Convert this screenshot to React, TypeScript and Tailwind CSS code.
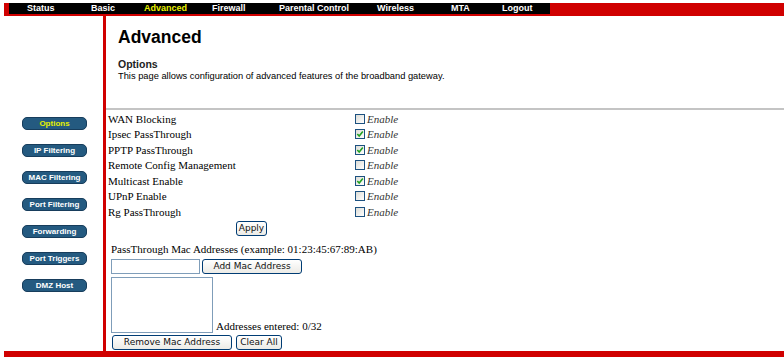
import React from 'react';

const NAV = [
  { label: 'Status', x: 27 },
  { label: 'Basic', x: 91 },
  { label: 'Advanced', x: 144, active: true },
  { label: 'Firewall', x: 212 },
  { label: 'Parental Control', x: 279 },
  { label: 'Wireless', x: 377 },
  { label: 'MTA', x: 451 },
  { label: 'Logout', x: 502 },
];

const SIDE = ['Options', 'IP Filtering', 'MAC Filtering', 'Port Filtering', 'Forwarding', 'Port Triggers', 'DMZ Host'];

const ROWS = [
  { label: 'WAN Blocking', on: false },
  { label: 'Ipsec PassThrough', on: true },
  { label: 'PPTP PassThrough', on: true },
  { label: 'Remote Config Management', on: false },
  { label: 'Multicast Enable', on: true },
  { label: 'UPnP Enable', on: false },
  { label: 'Rg PassThrough', on: false },
];

const Check = ({ on }: { on: boolean }) => (
  <span className="w-[10px] h-[10px] border border-[#1c5180] bg-gradient-to-br from-[#dcdcd6] to-white flex items-center justify-center">
    {on && (
      <svg width="8" height="8" viewBox="0 0 8 8">
        <path d="M1.3 4 L3.2 6 L6.8 1.6" stroke="#21a121" strokeWidth="1.6" fill="none" />
      </svg>
    )}
  </span>
);

const XpButton = ({ children, className }: { children: React.ReactNode; className: string }) => (
  <button
    className={`h-[15px] border border-[#003c74] rounded-[3px] bg-gradient-to-b from-white to-[#ecebe6] text-[9px] text-[#111] leading-none flex items-center justify-center ${className}`}
    style={{ fontFamily: '"DejaVu Sans", Verdana, sans-serif' }}
  >
    {children}
  </button>
);

export default function App() {
  return (
    <div className="w-[784px] h-[361px] bg-white overflow-hidden" style={{ fontFamily: '"Liberation Serif", "Times New Roman", serif' }}>
      {/* top nav */}
      <div className="mt-[3px] ml-[4px] h-[13px] bg-[#d00000]">
        <div className="ml-[5px] w-[541px] h-[11px] bg-black relative" style={{ fontFamily: '"Liberation Sans", Arial, sans-serif' }}>
          {NAV.map((n) => (
            <span
              key={n.label}
              className={`absolute top-0 text-[9px] font-bold leading-[11px] ${n.active ? 'text-[#e8f000]' : 'text-white'}`}
              style={{ left: n.x - 9 }}
            >
              {n.label}
            </span>
          ))}
        </div>
      </div>

      <div className="flex h-[335px]">
        {/* sidebar */}
        <div className="w-[103px] flex flex-col gap-[14px] pt-[101px] pl-[22px]" style={{ fontFamily: '"Liberation Sans", Arial, sans-serif' }}>
          {SIDE.map((s, i) => (
            <div
              key={s}
              className={`w-[65px] h-[13px] rounded-[5px] bg-[#245a80] border border-[#173d5c] flex items-center justify-center text-[8px] font-bold leading-none ${i === 0 ? 'text-[#e6f000]' : 'text-white'}`}
            >
              {s}
            </div>
          ))}
        </div>
        <div className="w-[3px] bg-[#d00000]" />

        {/* content */}
        <div className="flex-1 flex flex-col">
          <div className="pl-[12px] pt-[10px] h-[92px]" style={{ fontFamily: '"Liberation Sans", Arial, sans-serif' }}>
            <div className="text-[17.5px] font-bold leading-[22px] text-black">Advanced</div>
            <div className="mt-[10px] text-[10.5px] font-semibold leading-[12px] text-[#222]">Options</div>
            <div className="text-[9.3px] leading-[12px] text-black">This page allows configuration of advanced features of the broadband gateway.</div>
          </div>
          <div className="h-[2px] bg-[#c4c4c4]" />

          <div className="pl-[2px] pt-[1px] text-[11px] text-black">
            {ROWS.map((r) => (
              <div key={r.label} className="flex items-center h-[15.5px]">
                <span className="w-[247px]">{r.label}</span>
                <Check on={r.on} />
                <span className="ml-[2px] italic text-[#333]">Enable</span>
              </div>
            ))}
            <div className="flex pl-[128px] mt-[1px]">
              <XpButton className="w-[31px]">Apply</XpButton>
            </div>
            <div className="pl-[3px] mt-[7px] leading-[13px]">PassThrough Mac Addresses (example: 01:23:45:67:89:AB)</div>
            <div className="pl-[3px] mt-[3px] flex items-center gap-[2px]">
              <input className="w-[89px] h-[15px] border border-[#7f9db9] bg-white" />
              <XpButton className="w-[100px]">Add Mac Address</XpButton>
            </div>
            <div className="pl-[3px] mt-[3px] flex items-end gap-[3px]">
              <textarea className="w-[102px] h-[56px] border border-[#7f9db9] bg-white resize-none" />
              <span className="leading-[12px] mb-[1px]">Addresses entered: 0/32</span>
            </div>
            <div className="pl-[4px] mt-[2px] flex gap-[4px]">
              <XpButton className="w-[120px]">Remove Mac Address</XpButton>
              <XpButton className="w-[46px]">Clear All</XpButton>
            </div>
          </div>
        </div>
      </div>
      <div className="ml-[4px] h-[6px] bg-[#d00000]" />
    </div>
  );
}
